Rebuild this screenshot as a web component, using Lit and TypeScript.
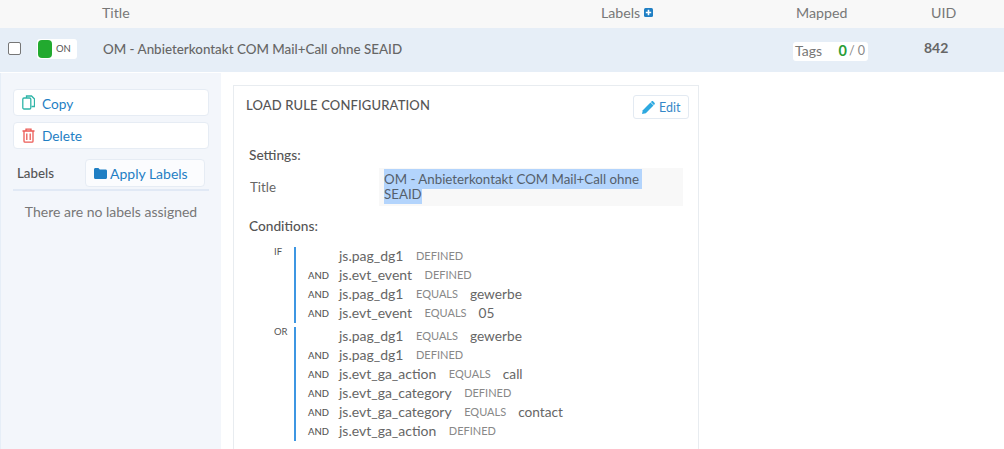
import { LitElement, html, css } from "lit";
import { customElement } from "lit/decorators.js";

type Cond = { op?: string; name: string; kind: string; val?: string };
const ifConds: Cond[] = [
  { name: "js.pag_dg1", kind: "DEFINED" },
  { op: "AND", name: "js.evt_event", kind: "DEFINED" },
  { op: "AND", name: "js.pag_dg1", kind: "EQUALS", val: "gewerbe" },
  { op: "AND", name: "js.evt_event", kind: "EQUALS", val: "05" },
];
const orConds: Cond[] = [
  { name: "js.pag_dg1", kind: "EQUALS", val: "gewerbe" },
  { op: "AND", name: "js.pag_dg1", kind: "DEFINED" },
  { op: "AND", name: "js.evt_ga_action", kind: "EQUALS", val: "call" },
  { op: "AND", name: "js.evt_ga_category", kind: "DEFINED" },
  { op: "AND", name: "js.evt_ga_category", kind: "EQUALS", val: "contact" },
  { op: "AND", name: "js.evt_ga_action", kind: "DEFINED" },
];

@customElement("app-root")
export class AppRoot extends LitElement {
  static styles = css`
    :host {
      display: block;
      width: 1004px;
      height: 449px;
      overflow: hidden;
      background: #fff;
      font-family: "Lato", "Liberation Sans", sans-serif;
      font-size: 13px;
      color: #666;
    }
    .cols {
      display: grid;
      grid-template-columns: 102px 499px 195px 135px 1fr;
      align-items: center;
    }
    .head {
      height: 28px;
      background: #f8f8f8;
      font-size: 14.2px;
      color: #777;
    }
    .head > span { display: flex; align-items: center; gap: 4px; padding-bottom: 3px; }
    .row {
      height: 44px;
      box-sizing: border-box;
      padding-bottom: 3px;
      background: #e6eef7;
    }
    .row-left { display: flex; align-items: center; padding-left: 8px; }
    .cb {
      width: 11px; height: 11px;
      border: 1px solid #767676;
      border-radius: 2px;
      background: #fff;
      margin-right: 16px;
    }
    .toggle {
      display: flex; align-items: center;
      width: 40px; height: 20px;
      background: #fff;
      border-radius: 3px;
      box-sizing: border-box;
      padding-left: 1px;
      font-size: 9.5px;
      color: #555;
    }
    .knob { width: 14px; height: 18px; background: #22aa2f; border-radius: 4px; margin-right: 4px; }
    .row-title { font-size: 13.4px; font-weight: 500; color: #666; padding-left: 1px; }
    .tags {
      display: flex; align-items: center;
      width: 75px; height: 19px;
      box-sizing: border-box;
      margin-left: -3px;
      margin-top: 5px;
      padding: 0 3px 2px 2px;
      background: #fff;
      border-radius: 3px;
      font-size: 14px;
      color: #777;
    }
    .tags .g { margin-left: auto; color: #2a9d37; font-weight: 700; font-size: 14.5px; }
    .tags .c { margin-left: 2px; font-size: 12.5px; color: #888; }
    .uid { font-weight: 700; color: #666; margin-left: -7px; font-size: 14px; padding-bottom: 2px; }
    .body {
      display: flex;
      margin-top: 1px;
      height: 376px;
    }
    .side {
      width: 221px;
      box-sizing: border-box;
      background: #f3f6fb;
      border-left: 1px solid #e6eef7;
      padding: 16px 12px 0 12px;
      flex: none;
    }
    .btn {
      display: flex; align-items: center; gap: 7px;
      height: 27px;
      box-sizing: border-box;
      padding-left: 8px;
      background: #fff;
      border: 1px solid #e6ecf4;
      border-radius: 4px;
      color: #1f7fc4;
      font-size: 13.7px;
      margin-bottom: 6px;
    }
    .btn .copy { padding-top: 2px; }
    .labels {
      display: flex; align-items: flex-end;
      border-bottom: 2px solid #e1e9f5;
      height: 32px;
      padding-bottom: 2px;
      margin-top: 1px;
      box-sizing: content-box;
    }
    .labels b { font-weight: 500; color: #555; padding: 0 0 6px 4px; width: 68px; flex: none; font-size: 13.3px; }
    .apply {
      display: flex; align-items: center; gap: 3px;
      width: 120px; height: 28px;
      box-sizing: border-box;
      padding-left: 8px;
      padding-top: 1px;
      border: 1px solid #e6ecf4;
      border-radius: 4px;
      background: #fbfcfe;
      color: #1f7fc4;
      font-size: 14px;
    }
    .none { text-align: center; margin-top: 12px; color: #777; font-size: 14px; }
    .card {
      width: 466px;
      box-sizing: border-box;
      margin: 12px 0 0 12px;
      border: 1px solid #e8ecf0;
      border-bottom: none;
      padding: 0 15px 0 12px;
      flex: none;
    }
    .card-head { display: flex; justify-content: space-between; padding-top: 9px; margin-right: -6px; }
    .card-title { font-size: 13px; font-weight: 500; color: #555; letter-spacing: 0.15px; padding-top: 2px; }
    .edit {
      display: flex; align-items: center; gap: 3px;
      width: 56px; height: 24px;
      box-sizing: border-box;
      padding-left: 7px;
      border: 1px solid #e3eaf2;
      border-radius: 3px;
      color: #3588c8;
      font-size: 12.5px;
    }
    h4 { margin: 0; font-size: 13.7px; font-weight: 500; color: #555; padding-left: 3px; }
    .settings { margin-top: 27px; }
    .title-row { display: flex; margin-top: 5px; padding-left: 4px; }
    .title-row .k { width: 129px; flex: none; padding-top: 11px; color: #666; font-size: 13.3px; }
    .title-row .v {
      flex: 1;
      background: #f8f8f8;
      height: 38px;
      box-sizing: border-box;
      padding: 4px 30px 0 5px;
      line-height: 15px;
      color: #555f6b;
      font-size: 13.3px;
    }
    .v mark { background: #b3d4fc; color: inherit; padding: 2px 0; }
    .v mark.l1 { padding-right: 3px; }
    .conditions { margin-top: 11px; }
    .group { display: flex; margin-left: 12px; }
    .tag { width: 20px; flex: none; font-size: 9.5px; color: #555; padding-left: 16px; box-sizing: content-box; line-height: 10px; }
    .bar { width: 2px; background: #3d96e2; flex: none; }
    .list { padding-left: 12px; }
    .line { display: flex; align-items: center; height: 19px; box-sizing: border-box; padding-bottom: 2px; }
    .line .op { width: 31px; flex: none; font-size: 9.5px; color: #555; font-weight: 500; padding-top: 2px; }
    .line .n { color: #666; font-size: 14px; }
    .line .t { color: #888; font-size: 11px; margin-left: 12.5px; }
    .line .val { color: #666; font-size: 13.7px; margin-left: 12px; }
    .g1 { margin-top: 13px; }
    .g2 { margin-top: 4px; }
  `;

  private line(c: Cond) {
    return html`<div class="line">
      <span class="op">${c.op ?? ""}</span>
      <span class="n">${c.name}</span>
      <span class="t">${c.kind}</span>
      ${c.val ? html`<span class="val">${c.val}</span>` : ""}
    </div>`;
  }

  render() {
    return html`
      <div class="cols head">
        <span></span>
        <span>Title</span>
        <span>Labels
          <svg width="9" height="9" viewBox="0 0 9 9"><rect width="9" height="9" rx="1.500" fill="#1f7fc4"/><path d="M4.500 1.800v5.400M1.800 4.500h5.400" stroke="#fff" stroke-width="1.600"/></svg>
        </span>
        <span>Mapped</span>
        <span>UID</span>
      </div>
      <div class="cols row">
        <div class="row-left">
          <span class="cb"></span>
          <span class="toggle"><span class="knob"></span>ON</span>
        </div>
        <div class="row-title">OM - Anbieterkontakt COM Mail+Call ohne SEAID</div>
        <div></div>
        <div class="tags"><span>Tags</span><span class="g">0</span><span class="c">/ 0</span></div>
        <div class="uid">842</div>
      </div>
      <div class="body">
        <aside class="side">
          <div class="btn">
            <svg width="13" height="15" viewBox="0 0 13 15" fill="none" stroke="#2fb5a8" stroke-width="1.300"><path d="M4.500 3V1h5l3 3v7.500h-3"/><rect x="0.800" y="3" width="8" height="11" rx="1.200"/></svg>
            <span class="copy">Copy</span>
          </div>
          <div class="btn">
            <svg width="13" height="15" viewBox="0 0 13 15" fill="none" stroke="#ec5a55" stroke-width="1.300"><path d="M0.500 3h12M4 3V1.200h5V3M2 3v10.200c0 .6.4 1 1 1h7c.6 0 1-.4 1-1V3M4.800 5.500v6.500M8.200 5.500v6.500"/></svg>
            <span>Delete</span>
          </div>
          <div class="labels">
            <b>Labels</b>
            <div class="apply">
              <svg width="13" height="11" viewBox="0 0 13 11"><path d="M0 1.500C0 .7.6 0 1.400 0h3l1.400 1.600h5.800c.8 0 1.400.6 1.400 1.400v6.500c0 .8-.6 1.500-1.400 1.500H1.400C.6 11 0 10.300 0 9.500z" fill="#1f7fc4"/></svg>
              <span>Apply Labels</span>
            </div>
          </div>
          <div class="none">There are no labels assigned</div>
        </aside>
        <section class="card">
          <div class="card-head">
            <div class="card-title">LOAD RULE CONFIGURATION</div>
            <div class="edit">
              <svg width="15" height="15" viewBox="0 0 15 15"><path d="M1 14l.8-3.800L9.500 2.500l3 3-7.700 7.700z" fill="#2ea9e0"/><path d="M10.500 1.500c.6-.6 1.300-.6 1.800 0l1.200 1.200c.5.5.5 1.200 0 1.700l-.7.700-3-3z" fill="#2ea9e0"/></svg>
              <span>Edit</span>
            </div>
          </div>
          <div class="settings"><h4>Settings:</h4></div>
          <div class="title-row">
            <div class="k">Title</div>
            <div class="v"><mark class="l1">OM - Anbieterkontakt COM Mail+Call ohne</mark> <mark>SEAID</mark></div>
          </div>
          <div class="conditions"><h4>Conditions:</h4></div>
          <div class="group g1">
            <div class="tag">IF</div><div class="bar"></div>
            <div class="list">${ifConds.map((c) => this.line(c))}</div>
          </div>
          <div class="group g2">
            <div class="tag">OR</div><div class="bar"></div>
            <div class="list">${orConds.map((c) => this.line(c))}</div>
          </div>
        </section>
      </div>
    `;
  }
}
